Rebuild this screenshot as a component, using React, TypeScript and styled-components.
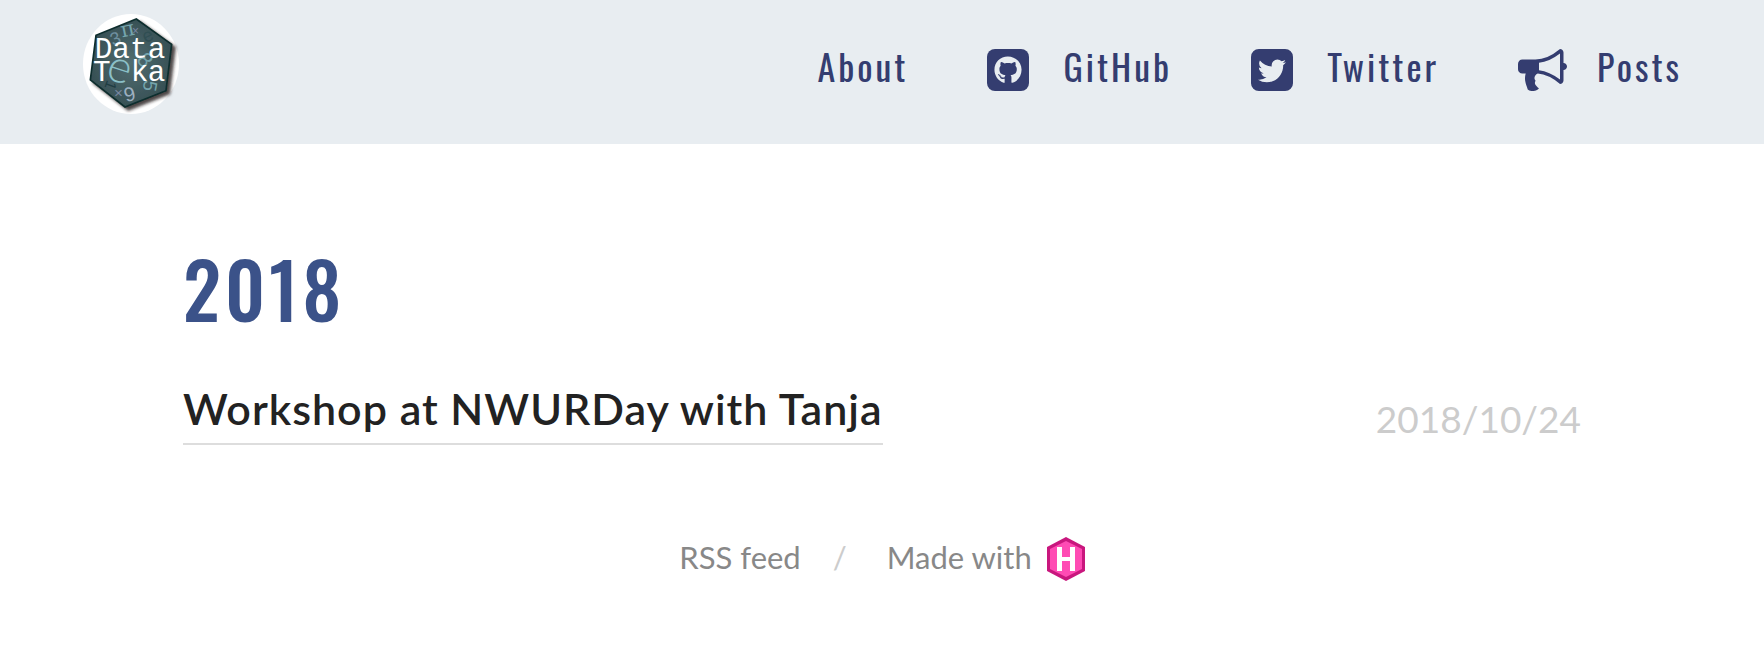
import React from "react";
import styled, { createGlobalStyle } from "styled-components";
import { FaGithub } from "react-icons/fa";

const navy = "#343d70";
const mist = "#e8edf1";
const condensed = `Oswald, "Roboto Condensed", sans-serif`;

const GlobalStyle = createGlobalStyle`
  *, *::before, *::after { box-sizing: border-box; }
  body { margin: 0; background: #fff; color: #222; font-family: Lato, sans-serif; }
  a { color: inherit; text-decoration: none; }
`;

const Header = styled.header`
  display: flex;
  align-items: flex-start;
  justify-content: space-between;
  height: 144px;
  padding: 14px 82px 0;
  background: ${mist};
`;
const LogoLink = styled.a`
  display: block;
  line-height: 0;
`;
const Nav = styled.nav`
  display: flex;
  gap: 79px;
  padding-top: 24px;
`;
const NavLink = styled.a<{ $gap?: number }>`
  display: flex;
  align-items: center;
  height: 64px;
  gap: ${({ $gap = 34 }) => $gap}px;
  font-family: ${condensed};
  font-size: 36px;
  letter-spacing: 3px;
  color: ${navy};
`;
const NavText = styled.span`
  padding-bottom: 10px;
`;
const IconTile = styled.span`
  display: grid;
  place-items: center;
  width: 42px;
  height: 42px;
  border-radius: 8px;
  background: ${navy};
  color: ${mist};
`;
const Main = styled.main`
  width: calc(100% - 366px);
  max-width: 1398px;
  margin: 0 auto;
  padding-top: 90px;
`;
const Year = styled.h1`
  margin: 0;
  font-family: ${condensed};
  font-size: 76px;
  line-height: 108px;
  font-weight: 500;
  letter-spacing: 4px;
  color: #3b5289;
`;
const Entry = styled.article`
  display: flex;
  justify-content: space-between;
  align-items: flex-end;
  margin-top: 41px;
`;
const EntryTitle = styled.a`
  padding-bottom: 8px;
  border-bottom: 2px solid #ddd;
  font-size: 43px;
  line-height: 52px;
  font-weight: 600;
  letter-spacing: 1px;
`;
const EntryDate = styled.time`
  padding-bottom: 2px;
  font-size: 37px;
  line-height: 48px;
  color: #ccc;
`;
const Footer = styled.footer`
  display: flex;
  justify-content: center;
  align-items: flex-start;
  margin-top: 88px;
  font-size: 31px;
  line-height: 48px;
  color: #888;
`;
const Slash = styled.span`
  margin: 0 40px 0 32px;
  color: #ccc;
`;
const MadeWith = styled.a`
  display: flex;
  align-items: flex-end;
  gap: 15px;
`;

function Logo() {
  return (
    <svg width="98" height="100" viewBox="0 0 294 300" role="img" aria-label="DataTeka">
      <defs>
        <filter id="shade" x="-20%" y="-20%" width="150%" height="150%">
          <feDropShadow dx="10" dy="9" stdDeviation="5" floodColor="#201818" floodOpacity="0.8" />
        </filter>
        <radialGradient id="slate">
          <stop offset="0" stopColor="#516d70" />
          <stop offset="1" stopColor="#375055" />
        </radialGradient>
      </defs>
      <ellipse cx="147" cy="150" rx="144" ry="150" fill="#fff" />
      <path d="M163 15L269 91L252 230L129 279L25 198L42 64Z" fill="url(#slate)" stroke="#0d2d2d" strokeWidth="5" filter="url(#shade)" />
      <g fontFamily="Liberation Sans, sans-serif" fill="#75a5ad">
        <text x="116" y="66" fontSize="64" fontFamily="DejaVu Serif, serif" transform="rotate(-12 140 50)">π</text>
        <text x="76" y="206" fontSize="136" fill="#8cc0c8" fontFamily="Lato, sans-serif" fontWeight="300" transform="rotate(18 115 170)">e</text>
        <text x="172" y="160" fontSize="64" transform="rotate(50 190 138)">8</text>
        <text x="186" y="238" fontSize="58" transform="rotate(100 204 218)">5</text>
        <text x="126" y="260" fontSize="60" fill="#9db0c0" transform="rotate(-15 146 240)">9</text>
        <text x="86" y="92" fontSize="54" fill="#6f90a0" transform="rotate(-20 100 76)">3</text>
        <text x="96" y="252" fontSize="46" fill="#7886a0">×</text>
        <text x="68" y="226" fontSize="46" fill="#203d42" transform="rotate(110 82 214)">1</text>
        <text x="184" y="82" fontSize="56" fill="#304e53" transform="rotate(-25 200 70)">e</text>
        <text x="150" y="62" fontSize="36" fill="#7886a0">×</text>
      </g>
      <g fontFamily="Liberation Mono, monospace" fontSize="88" fill="#fff">
        <text x="38 91 144 197" y="133">Data</text>
        <text x="33 146 197" y="201">Tka</text>
      </g>
    </svg>
  );
}

const TwitterSquare = () => (
  <svg width="42" height="42" viewBox="128 128 1536 1536" fill={navy} aria-hidden="true">
    <path d="M1408 610q-56 25-121 34 68-40 93-117-65 38-134 51-61-66-153-66-87 0-148.5 61.5t-61.5 148.5q0 29 5 48-129-7-242-65t-192-155q-29 50-29 106 0 114 91 175-47-1-100-26v2q0 75 50 133.5t123 72.5q-29 8-51 8-13 0-39-4 21 63 74.5 104t121.5 42q-116 90-261 90-26 0-50-3 148 94 322 94 112 0 210-35.5t168-95 120.5-137 75-162 24.5-168.5q0-18-1-27 63-45 105-109zm256-194v960q0 119-84.5 203.5t-203.5 84.5h-960q-119 0-203.5-84.5t-84.5-203.5v-960q0-119 84.5-203.5t203.5-84.5h960q119 0 203.5 84.5t84.5 203.5z" />
  </svg>
);
const Bullhorn = () => (
  <svg width="49" height="42" viewBox="0 128 1792 1536" fill={navy} aria-hidden="true">
    <path d="M1664 640q53 0 90.500 37.500t37.500 90.500-37.500 90.500-90.500 37.500v384q0 52-38 90t-90 38q-417-347-812-380-58 19-91 66t-31 100.500 40 92.500q-20 33-23 65.500t6 58 33.500 55 48 50 61.500 50.500q-29 58-111.500 83t-168.500 11.500-132-55.500q-7-23-29.500-87.500t-32-94.500-23-89-15-101 3.500-98.500 22-110.500h-122q-66 0-113-47t-47-113v-192q0-66 47-113t113-47h480q435 0 896-384 52 0 90 38t38 90v384zm-128 604v-954q-394 302-768 343v270q377 42 768 341z" />
  </svg>
);
const HugoMark = () => (
  <svg width="38" height="44" viewBox="0 0 38 44" role="img" aria-label="Hugo">
    <path d="M19 0L38 10V34L19 44L0 34V10Z" fill="#c9177e" />
    <path d="M19 4L35 12V32L19 40L3 32V12Z" fill="#ff4bb4" />
    <path d="M10 10h5v10h8v-10h5v24h-5v-10h-8v10h-5z" fill="#fff" />
  </svg>
);

export default function App() {
  return (
    <>
      <GlobalStyle />
      <Header>
        <LogoLink href="#home"><Logo /></LogoLink>
        <Nav>
          <NavLink href="#about"><NavText>About</NavText></NavLink>
          <NavLink href="#github"><IconTile><FaGithub size={28} /></IconTile><NavText>GitHub</NavText></NavLink>
          <NavLink href="#twitter"><TwitterSquare /><NavText>Twitter</NavText></NavLink>
          <NavLink href="#posts" $gap={30}><Bullhorn /><NavText>Posts</NavText></NavLink>
        </Nav>
      </Header>
      <Main>
        <Year>2018</Year>
        <Entry>
          <EntryTitle href="#workshop">Workshop at NWURDay with Tanja</EntryTitle>
          <EntryDate dateTime="2018-10-24">2018/10/24</EntryDate>
        </Entry>
      </Main>
      <Footer>
        <a href="#rss">RSS feed</a>
        <Slash>/</Slash>
        <MadeWith href="#hugo">Made with <HugoMark /></MadeWith>
      </Footer>
    </>
  );
}
